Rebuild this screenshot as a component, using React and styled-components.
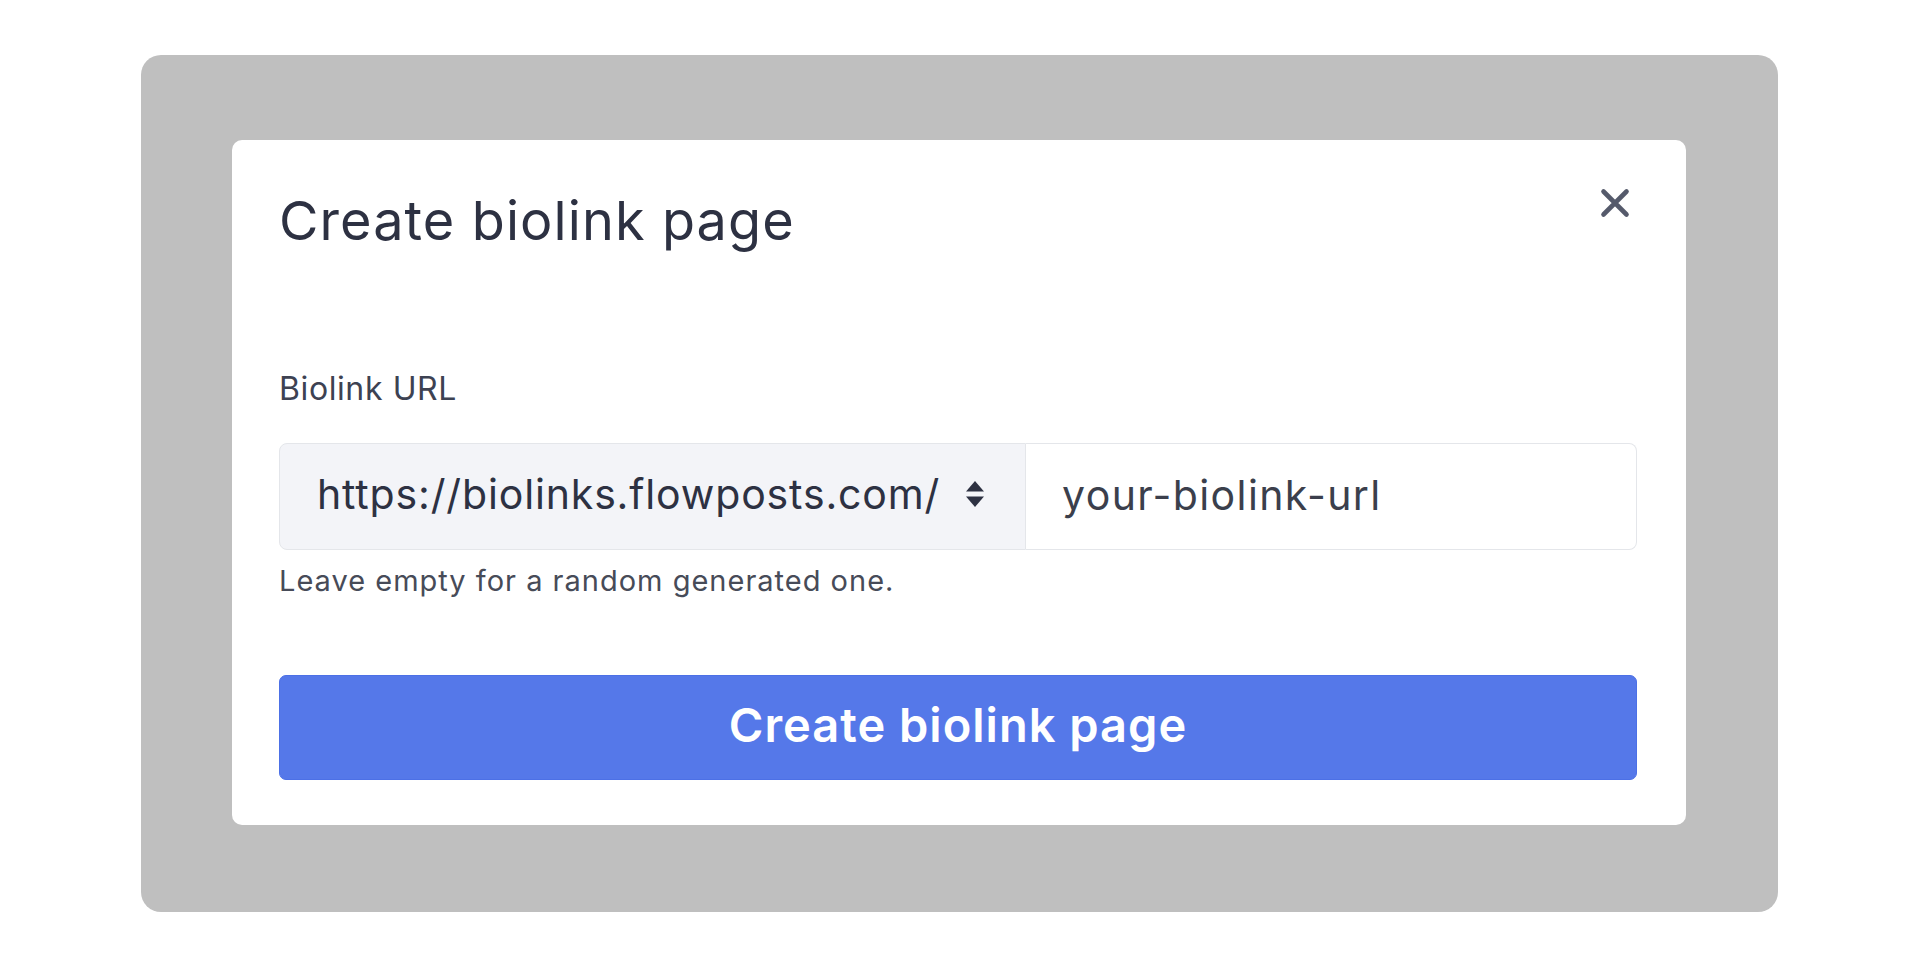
import React from "react";
import styled, { createGlobalStyle } from "styled-components";

const Global = createGlobalStyle`
  html, body { margin: 0; padding: 0; background: #ffffff; }
  body { font-family: Inter, "Noto Sans", sans-serif; }
  * { box-sizing: border-box; }
`;

const Page = styled.div`
  padding: 55px 0 0 141px;
`;

const Backdrop = styled.div`
  width: 1637px;
  height: 857px;
  padding: 85px 92px 87px 91px;
  background: #bfbfbf;
  border-radius: 20px;
`;

const Modal = styled.div`
  position: relative;
  height: 685px;
  padding: 49px 49px 45px 47px;
  background: #ffffff;
  border-radius: 10px;
  display: flex;
  flex-direction: column;
`;

const Title = styled.h2`
  margin: 0;
  font-size: 54px;
  font-weight: 400;
  letter-spacing: 1.1px;
  line-height: 1.2;
  color: #2d3142;
`;

const CloseButton = styled.button`
  position: absolute;
  top: 48px;
  right: 56px;
  width: 30px;
  height: 30px;
  padding: 0;
  border: 0;
  background: transparent;
  color: #555a6b;
  cursor: pointer;
  display: flex;
  align-items: center;
  justify-content: center;
`;

const Label = styled.label`
  margin-top: 116px;
  font-size: 32px;
  letter-spacing: 0.6px;
  line-height: 1.2;
  color: #3d4252;
`;

const InputGroup = styled.div`
  margin-top: 35px;
  height: 107px;
  display: flex;
`;

const Prefix = styled.div`
  width: 747px;
  flex: none;
  display: flex;
  align-items: center;
  justify-content: space-between;
  padding: 0 40px 6px 37px;
  background: #f3f4f8;
  border: 1px solid #e4e6ea;
  border-radius: 8px 0 0 8px;
  font-size: 41px;
  letter-spacing: 0.85px;
  color: #2d3142;
`;

const UrlInput = styled.input`
  flex: 1;
  min-width: 0;
  height: 100%;
  padding: 0 0 4px 36px;
  border: 1px solid #e4e6ea;
  border-left: 0;
  border-radius: 0 8px 8px 0;
  background: #ffffff;
  font-family: Inter, "Noto Sans", sans-serif;
  font-size: 41px;
  letter-spacing: 1.4px;
  color: #3b3f4c;
  outline: none;
`;

const Help = styled.small`
  margin-top: 14px;
  font-size: 29px;
  letter-spacing: 1px;
  line-height: 1.2;
  color: #474b58;
`;

const SubmitButton = styled.button`
  margin-top: 76px;
  height: 105px;
  width: 100%;
  padding: 0 0 5px;
  border: 1px solid #4c70e6;
  border-radius: 7px;
  background: #5578e9;
  color: #ffffff;
  font-family: Inter, "Noto Sans", sans-serif;
  font-size: 47px;
  font-weight: 600;
  letter-spacing: 1px;
  cursor: pointer;
`;

const SortIcon = () => (
  <svg width="20" height="30" viewBox="0 0 20 30" aria-hidden="true">
    <path d="M1 12.5 L10 2 L19 12.5 Z" fill="#2d3142" />
    <path d="M1 17.5 L10 28 L19 17.5 Z" fill="#2d3142" />
  </svg>
);

const CloseIcon = () => (
  <svg width="30" height="30" viewBox="0 0 30 30" aria-hidden="true">
    <path d="M3.5 3.5 L26.5 26.5 M26.5 3.5 L3.5 26.5" stroke="currentColor" strokeWidth="4.6" strokeLinecap="round" />
  </svg>
);

export default function App() {
  return (
    <>
      <Global />
      <Page>
        <Backdrop>
          <Modal>
            <Title>Create biolink page</Title>
            <CloseButton aria-label="Close">
              <CloseIcon />
            </CloseButton>
            <Label>Biolink URL</Label>
            <InputGroup>
              <Prefix>
                <span>https://biolinks.flowposts.com/</span>
                <SortIcon />
              </Prefix>
              <UrlInput readOnly value="your-biolink-url" />
            </InputGroup>
            <Help>Leave empty for a random generated one.</Help>
            <SubmitButton>Create biolink page</SubmitButton>
          </Modal>
        </Backdrop>
      </Page>
    </>
  );
}
